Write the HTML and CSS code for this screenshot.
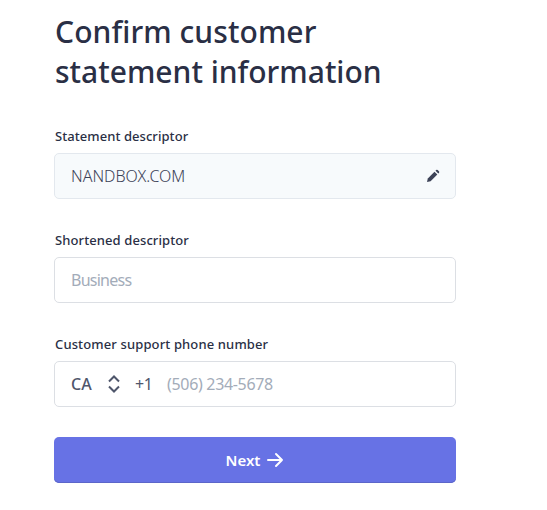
FILE: index.html
```html
<!DOCTYPE html>
<html lang="en">
<head>
    <meta charset="UTF-8">
    <meta name="viewport" content="width=device-width, initial-scale=1.0">
    <title>Confirm customer statement information</title>
    <link rel="stylesheet" href="styles.css">
</head>
<body>

<form class="container">
    <h1><span class="line-one">Confirm customer</span><br>statement information</h1>

    <label class="label-statement">Statement descriptor</label>
    <div class="field readonly">
        <span class="value">NANDBOX.COM</span>
        <svg class="edit" width="14" height="14" viewBox="0 0 14 14" fill="#3c4257">
            <path d="M1 13l.8-3.6 6.7-6.7 2.8 2.8-6.7 6.7z"/>
            <path d="M9.5 1.7l.6-.6a1.1 1.1 0 0 1 1.6 0l1.2 1.2a1.1 1.1 0 0 1 0 1.6l-.6.6z"/>
        </svg>
    </div>

    <label class="label-short">Shortened descriptor</label>
    <div class="field">
        <span class="placeholder business">Business</span>
    </div>

    <label class="label-phone">Customer support phone number</label>
    <div class="field phone-field">
        <span class="country">CA</span>
        <svg class="arrows" width="14" height="18" viewBox="0 0 14 18" fill="none" stroke="#4f566b" stroke-width="2">
            <path d="M2 6.5l5-5 5 5M2 11.5l5 5 5-5"/>
        </svg>
        <span class="prefix">+1</span>
        <span class="placeholder phone">(506) 234-5678</span>
    </div>

    <button type="button">
        <span>Next</span>
        <svg width="18" height="16" viewBox="0 0 18 16" fill="none" stroke="#fff" stroke-width="2" stroke-linecap="round" stroke-linejoin="round">
            <path d="M2 8h14M10 2l6 6-6 6"/>
        </svg>
    </button>
</form>

</body>
</html>
```
FILE: styles.css
```css
body {
    font-family: "Noto Sans", "Open Sans", sans-serif;
    background-color: #ffffff;
    margin: 0;
    color: #2a2f45;
}
.container {
    width: 402px;
    margin-left: 54px;
    padding-top: 12px;
}
h1 {
    margin: 0 0 34px 1px;
    font-size: 30px;
    line-height: 40px;
    font-weight: 500;
    white-space: nowrap;
}
.line-one {
    letter-spacing: 0.08px;
}
label {
    display: block;
    height: 20px;
    margin: 0 0 7px 1px;
    font-size: 13px;
    line-height: 20px;
    font-weight: 500;
    white-space: nowrap;
}
.label-statement {
    letter-spacing: 0.06px;
}
.label-short {
    letter-spacing: 0.1px;
}
.label-phone {
    letter-spacing: 0.13px;
}
.field {
    box-sizing: border-box;
    display: flex;
    align-items: center;
    height: 46px;
    margin-bottom: 31px;
    padding: 0 16px;
    border: 1px solid #dcdfe4;
    border-radius: 5px;
    font-size: 16px;
    color: #4f566b;
    white-space: nowrap;
}
.readonly {
    padding-right: 15px;
    background-color: #f7fafc;
    border-color: #e3e8ee;
}
.phone-field {
    margin-bottom: 30px;
}
.value {
    font-weight: 300;
    color: #3c4257;
}
.edit {
    margin-left: auto;
}
.placeholder {
    color: #a3acb9;
}
.business {
    letter-spacing: -0.75px;
}
.phone {
    letter-spacing: -0.32px;
}
.country {
    width: 36px;
    font-weight: 500;
}
.arrows {
    width: 14px;
    margin-right: 14px;
}
.prefix {
    width: 32px;
    letter-spacing: -0.5px;
}
button {
    display: flex;
    align-items: center;
    justify-content: center;
    gap: 6px;
    width: 100%;
    height: 46px;
    padding: 0;
    font-family: inherit;
    font-size: 15px;
    font-weight: 600;
    border: none;
    border-radius: 5px;
    background-color: #6772e5;
    color: white;
    box-shadow: inset 0 -1px 0 #5c66c9;
    cursor: pointer;
}
```
